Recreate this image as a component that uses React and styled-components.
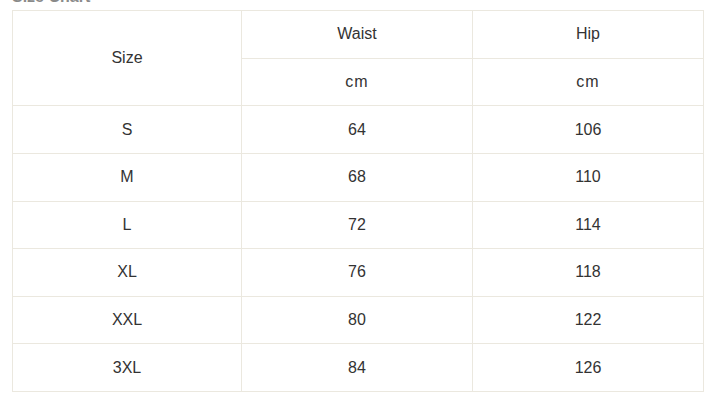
import React from "react";
import styled, { createGlobalStyle } from "styled-components";

const Global = createGlobalStyle`
  html, body { margin: 0; padding: 0; background: #ffffff; }
  body { font-family: "Liberation Sans", Arial, sans-serif; overflow: hidden; }
`;

const Page = styled.div`
  padding: 0 20px 0 12px;
`;

const Title = styled.h3`
  margin: -12px 0 4px 0;
  font-size: 16px;
  line-height: 18px;
  font-weight: 700;
  color: #8a8a8a;
`;

const Table = styled.table`
  width: 691px;
  height: 382px;
  border-collapse: collapse;
  table-layout: fixed;
  color: #333333;
  font-size: 16px;
`;

const Cell = styled.td`
  border: 1px solid #ebe8df;
  text-align: center;
  vertical-align: middle;
  padding: 0;
  font-weight: 400;
  height: 40px;
  letter-spacing: ${(p) => (p.$spaced ? "1px" : "0")};
`;

const rows = [
  ["S", 64, 106],
  ["M", 68, 110],
  ["L", 72, 114],
  ["XL", 76, 118],
  ["XXL", 80, 122],
  ["3XL", 84, 126],
];

export default function App() {
  return (
    <>
      <Global />
      <Page>
        <Title>Size Chart</Title>
        <Table>
          <colgroup>
            <col style={{ width: "229px" }} />
            <col style={{ width: "231px" }} />
            <col style={{ width: "231px" }} />
          </colgroup>
          <tbody>
            <tr>
              <Cell rowSpan={2}>Size</Cell>
              <Cell>Waist</Cell>
              <Cell>Hip</Cell>
            </tr>
            <tr>
              <Cell $spaced>cm</Cell>
              <Cell $spaced>cm</Cell>
            </tr>
            {rows.map(([s, w, h]) => (
              <tr key={s}>
                <Cell>{s}</Cell>
                <Cell>{w}</Cell>
                <Cell>{h}</Cell>
              </tr>
            ))}
          </tbody>
        </Table>
      </Page>
    </>
  );
}
